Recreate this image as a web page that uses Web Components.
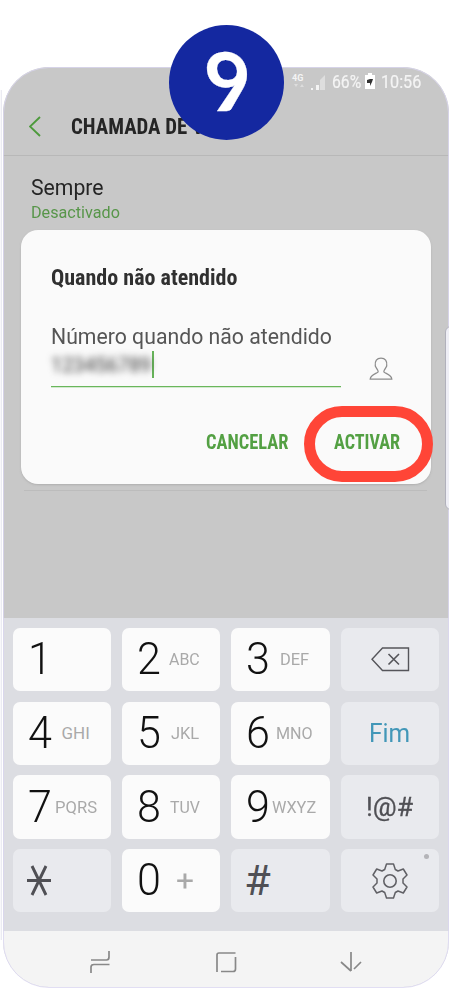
<!DOCTYPE html>
<html lang="pt"><head><meta charset="utf-8"><title>Chamada de voz</title>
<style>html,body{margin:0;background:#fff;width:449px;height:988px;overflow:hidden;font-family:Roboto,sans-serif}</style></head>
<body><call-page></call-page>
<script>
const def=(name,html,init)=>{const t=document.createElement('template');t.innerHTML=html;
customElements.define(name,class extends HTMLElement{connectedCallback(){if(this.shadowRoot)return;this.attachShadow({mode:'open'}).append(t.content.cloneNode(true));init&&init(this,this.shadowRoot)}})};

// Text run condensed or expanded to the width given in "w".
def('fit-text',`<style>:host{display:block;white-space:nowrap;line-height:1;flex:none}span{display:inline-block;transform-origin:0 50%;vertical-align:top}</style><span><slot></slot></span>`,(el,r)=>{
 const w=+el.getAttribute('w'),s=r.querySelector('span');s.style.transform='scaleX('+w/s.offsetWidth+')';el.style.width=w+'px'});

def('step-badge',`<style>:host{display:flex;justify-content:center;width:115px;height:115px;border-radius:50%;background:#1428a0;color:#fff;font:700 81px/109px Lato,sans-serif}span{height:81px;line-height:81px;margin:14px 0 0 3px;transform:skewX(7deg);-webkit-text-stroke:.3px #fff}</style><span><slot></slot></span>`);

def('status-bar',`<style>:host{display:flex;height:30px;padding:5px 28px 0 0;justify-content:flex-end;color:#f4f4f4;box-sizing:border-box}
.net{font:700 9px/9px Roboto;width:13px;margin:2px 6px 0 0}svg{display:block}.g{margin:3px 6px 0 0}.b{margin:1px 6px 0 4px}fit-text{font-size:19px;-webkit-text-stroke:.2px}</style>
<div class="net">4G<svg width="13" height="5"><path d="M2 1l2 3 2-3M8 4l2-3 2 3" fill="#ddd"/></svg></div>
<svg class="g" width="15" height="15"><path d="M0 15v-2h2v2zM5 15v-5h3v5z" fill="#f4f4f4"/><path d="M9 15V5l5-5v15z" fill="#dedede"/></svg>
<fit-text w="29">66%</fit-text>
<svg class="b" width="10" height="16"><path d="M0 2h3V0h4v2h3v14H0z" fill="#fff"/><path d="M2 7l3-1 3 0-1 3-2 4v-3l-3 0z" fill="#333"/></svg>
<fit-text w="40">10:56</fit-text>`);

def('app-bar',`<style>:host{display:flex;height:59px;box-sizing:border-box;border-bottom:1px solid #b8b8b8;padding:19px 0 0 26px;color:#252525}
svg{flex:none;margin-right:30px}fit-text{font:700 22.500px/22px "Roboto Condensed",Roboto,sans-serif;margin-top:-1px}</style>
<svg width="12" height="21"><path d="M11 1L1 10.500 11 20" fill="none" stroke="#4d9a3c" stroke-width="1.900"/></svg><fit-text w="133"><slot></slot></fit-text>`);

def('setting-row',`<style>:host{display:block;padding:21px 28px 0}.t{font-size:21.500px;color:#252525}.s{font-size:17px;color:#58964a;margin-top:5px}</style>
<fit-text class="t" w="73"><slot></slot></fit-text><fit-text class="s" w="88.500"><slot name="state"></slot></fit-text>`);

def('forward-dialog',`<style>:host{display:block;box-sizing:border-box;width:409.500px;height:254px;border-radius:17px;background:#fafafa;padding:36px 30px 0;box-shadow:0 1px 2px #9998}
h2{margin:0;font:700 22.500px/22px "Roboto Condensed",Roboto,sans-serif;color:#303030}.l{font-size:21.500px;line-height:21px;color:#555;margin-top:37px}
.row{display:flex;justify-content:space-between;padding-right:8px}.field{width:290px;height:40px;border-bottom:1px solid #69b65b;box-shadow:0 1px #d3e9cf;display:flex;box-sizing:border-box;padding-top:4px}
.num{font-size:20px;color:#333;filter:blur(3.500px);padding-top:4px}.cur{width:2px;height:27px;background:#67b45a;margin-left:1px}
svg{margin-top:10px}.act{display:flex;justify-content:flex-end;gap:46px;margin:46px 1px 0 0;color:#53a043}.act fit-text{font:700 19.500px/20px "Roboto Condensed",Roboto,sans-serif}</style>
<h2><fit-text w="186"><slot name="title"></slot></fit-text></h2><fit-text class="l" w="280.500"><slot name="label"></slot></fit-text>
<div class="row"><div class="field"><fit-text class="num" w="100"><slot name="value"></slot></fit-text><div class="cur"></div></div>
<svg width="24" height="24" viewBox="0 0 24 24"><path d="M9 15c1-1-2-4-2.700-6C5.500 3.500 8 1.200 12 1.200s6.500 2.300 5.700 7.800C17 11 14 14 15 15c1 1.500 7.500 2.500 7.800 7.200H1.200C1.500 17.500 8 16.500 9 15z" fill="none" stroke="#8c8c8c" stroke-width="1.300"/></svg></div>
<div class="act"><fit-text w="82"><slot name="cancel"></slot></fit-text><fit-text w="66"><slot name="ok"></slot></fit-text></div>`);

def('pad-key',`<style>:host{display:flex;align-items:center;height:63.300px;border-radius:7px;background:#fbfbfb;color:#111;position:relative;box-sizing:border-box}
:host([alt]){background:#e9eaee;color:#505055}:host([mid]){justify-content:center}
.n{font-weight:300;font-size:44px;line-height:1;width:26px;margin-left:15px;padding-bottom:1px}.a{flex:none;width:46px;margin-left:-1px;display:flex;justify-content:center;color:#a9a9a9;font-size:17px}
:host([mid]) .n,:host([mid]) .a{display:none}</style><div class="n"></div><div class="a"></div><slot></slot>`,(el,r)=>{
 const n=el.getAttribute('n'),a=el.getAttribute('a');const N=r.querySelector('.n'),A=r.querySelector('.a');
 if(n){const f=document.createElement('fit-text');f.setAttribute('w',23.5);f.textContent=n;N.append(f)}else N.remove();
 if(a){const f=document.createElement('fit-text');f.setAttribute('w',el.getAttribute('w'));f.textContent=a;if(a=='+'){f.style.fontSize='30px'}A.append(f)}else A.remove()});

def('key-pad',`<style>:host{display:grid;grid-template-columns:repeat(4,98.300px);gap:10.400px 11.100px;padding:10px 0 0 9.500px;height:313px;box-sizing:border-box;background:#dcdde2;align-content:start}
.fim{font-size:25.500px;color:#4297b8;padding-top:1px}.sym{font-size:26px;-webkit-text-stroke:.3px}.hash{font-size:43px;margin-left:13px}.star{margin-left:14px}.dot{position:absolute;right:10px;top:5px;width:5px;height:5px;border-radius:50%;background:#b4b4b8}.del{margin-left:2px}</style>
<pad-key n="1"></pad-key><pad-key n="2" a="ABC" w="31"></pad-key><pad-key n="3" a="DEF" w="29"></pad-key>
<pad-key alt mid><svg class="del" width="39" height="25"><path d="M11.500 1H37.500V23.500H11.500L1 12.200z" fill="none" stroke="#55555a" stroke-width="1.400"/><path d="M17.500 7l10.500 10.500M28 7L17.500 17.500" stroke="#55555a" stroke-width="1.600"/></svg></pad-key>
<pad-key n="4" a="GHI" w="28"></pad-key><pad-key n="5" a="JKL" w="28"></pad-key><pad-key n="6" a="MNO" w="37"></pad-key><pad-key alt mid><fit-text class="fim" w="41.500">Fim</fit-text></pad-key>
<pad-key n="7" a="PQRS" w="42"></pad-key><pad-key n="8" a="TUV" w="30"></pad-key><pad-key n="9" a="WXYZ" w="44"></pad-key><pad-key alt mid><fit-text class="sym" w="47">!@#</fit-text></pad-key>
<pad-key alt><svg class="star" width="26" height="32"><path d="M0 15.500H24M5 1L19 30M19 1L5 30" stroke="#505055" stroke-width="2.900"/></svg></pad-key><pad-key n="0" a="+" w="18"></pad-key><pad-key alt><fit-text class="hash" w="26">#</fit-text></pad-key>
<pad-key alt mid><svg width="36" height="36" viewBox="-18 -18 36 36"><path fill="none" stroke="#606065" stroke-width="1.500" stroke-linejoin="round" d="M-3.500-17H3.500L5.300-11.500 8-10 13.300-12 17-6 13-2V2L17 6 13.300 12 8 10 5.300 11.500 3.500 17H-3.500L-5.300 11.500-8 10-13.300 12-17 6-13 2V-2L-17-6-13.300-12-8-10-5.300-11.500z"/><circle r="6.200" fill="none" stroke="#606065" stroke-width="1.600"/></svg><div class="dot"></div></pad-key>`);

def('nav-bar',`<style>:host{display:flex;height:56px;background:#f4f4f4;align-items:center;padding:6px 0 0 86px;box-sizing:border-box;gap:103.500px}svg{fill:none;stroke:#888;stroke-width:1.700}</style>
<svg width="22" height="24"><path d="M2 10H17.500Q20 10 20 7V1M2 23V17Q2 14.500 5 14.500H20.500"/></svg>
<svg width="22" height="22"><path d="M2 21V4Q2 2 4 2H20.500M20.500 6V18Q20.500 20.500 18 20.500H6"/></svg>
<svg width="22" height="22"><path d="M11 1V20M1 11L11 20M21 11L14 18"/></svg>`);

def('call-page',`<style>:host{display:block;position:relative;width:449px;height:988px}
.phone{box-sizing:border-box;margin-left:3px;width:446px;height:920px;border-radius:46px;overflow:hidden;background:#c8c8c8;display:flex;flex-direction:column}
.phone>*{flex:none}.wrap{padding-top:67px}.main{height:462px}.ovl{position:absolute}.line{left:24px;top:490px;width:403px;height:1px;background:#bcbcbc}
.edge{left:0;top:90px;width:2px;height:850px;background:linear-gradient(90deg,#fff,#e4e4ee)}
.side{left:445px;top:326px;width:12px;height:184px;box-sizing:border-box;border:1px solid #b1b1bb;border-radius:6px;background:#eeeef5}
.ring{left:304px;top:406px;width:129px;height:76px;box-sizing:border-box;border:11px solid #ff4537;border-radius:38px}
.frame{left:3px;top:67px;width:446px;height:921px;border-radius:46px;box-sizing:border-box;border:1px solid #d9d6f0;opacity:.8}</style>
<div class="wrap"><div class="phone"><status-bar></status-bar><app-bar>CHAMADA DE V</app-bar><div class="main"><setting-row>Sempre<span slot="state">Desactivado</span></setting-row></div><key-pad></key-pad><nav-bar></nav-bar></div></div>
<div class="ovl edge"></div><div class="ovl frame"></div><div class="ovl line"></div><div class="ovl side"></div>
<forward-dialog class="ovl" style="left:21px;top:230px"><span slot="title">Quando não atendido</span><span slot="label">Número quando não atendido</span><span slot="value">123456789</span><span slot="cancel">CANCELAR</span><span slot="ok">ACTIVAR</span></forward-dialog>
<div class="ovl ring"></div><step-badge class="ovl" style="left:169px;top:25px">9</step-badge>`);
</script></body></html>
